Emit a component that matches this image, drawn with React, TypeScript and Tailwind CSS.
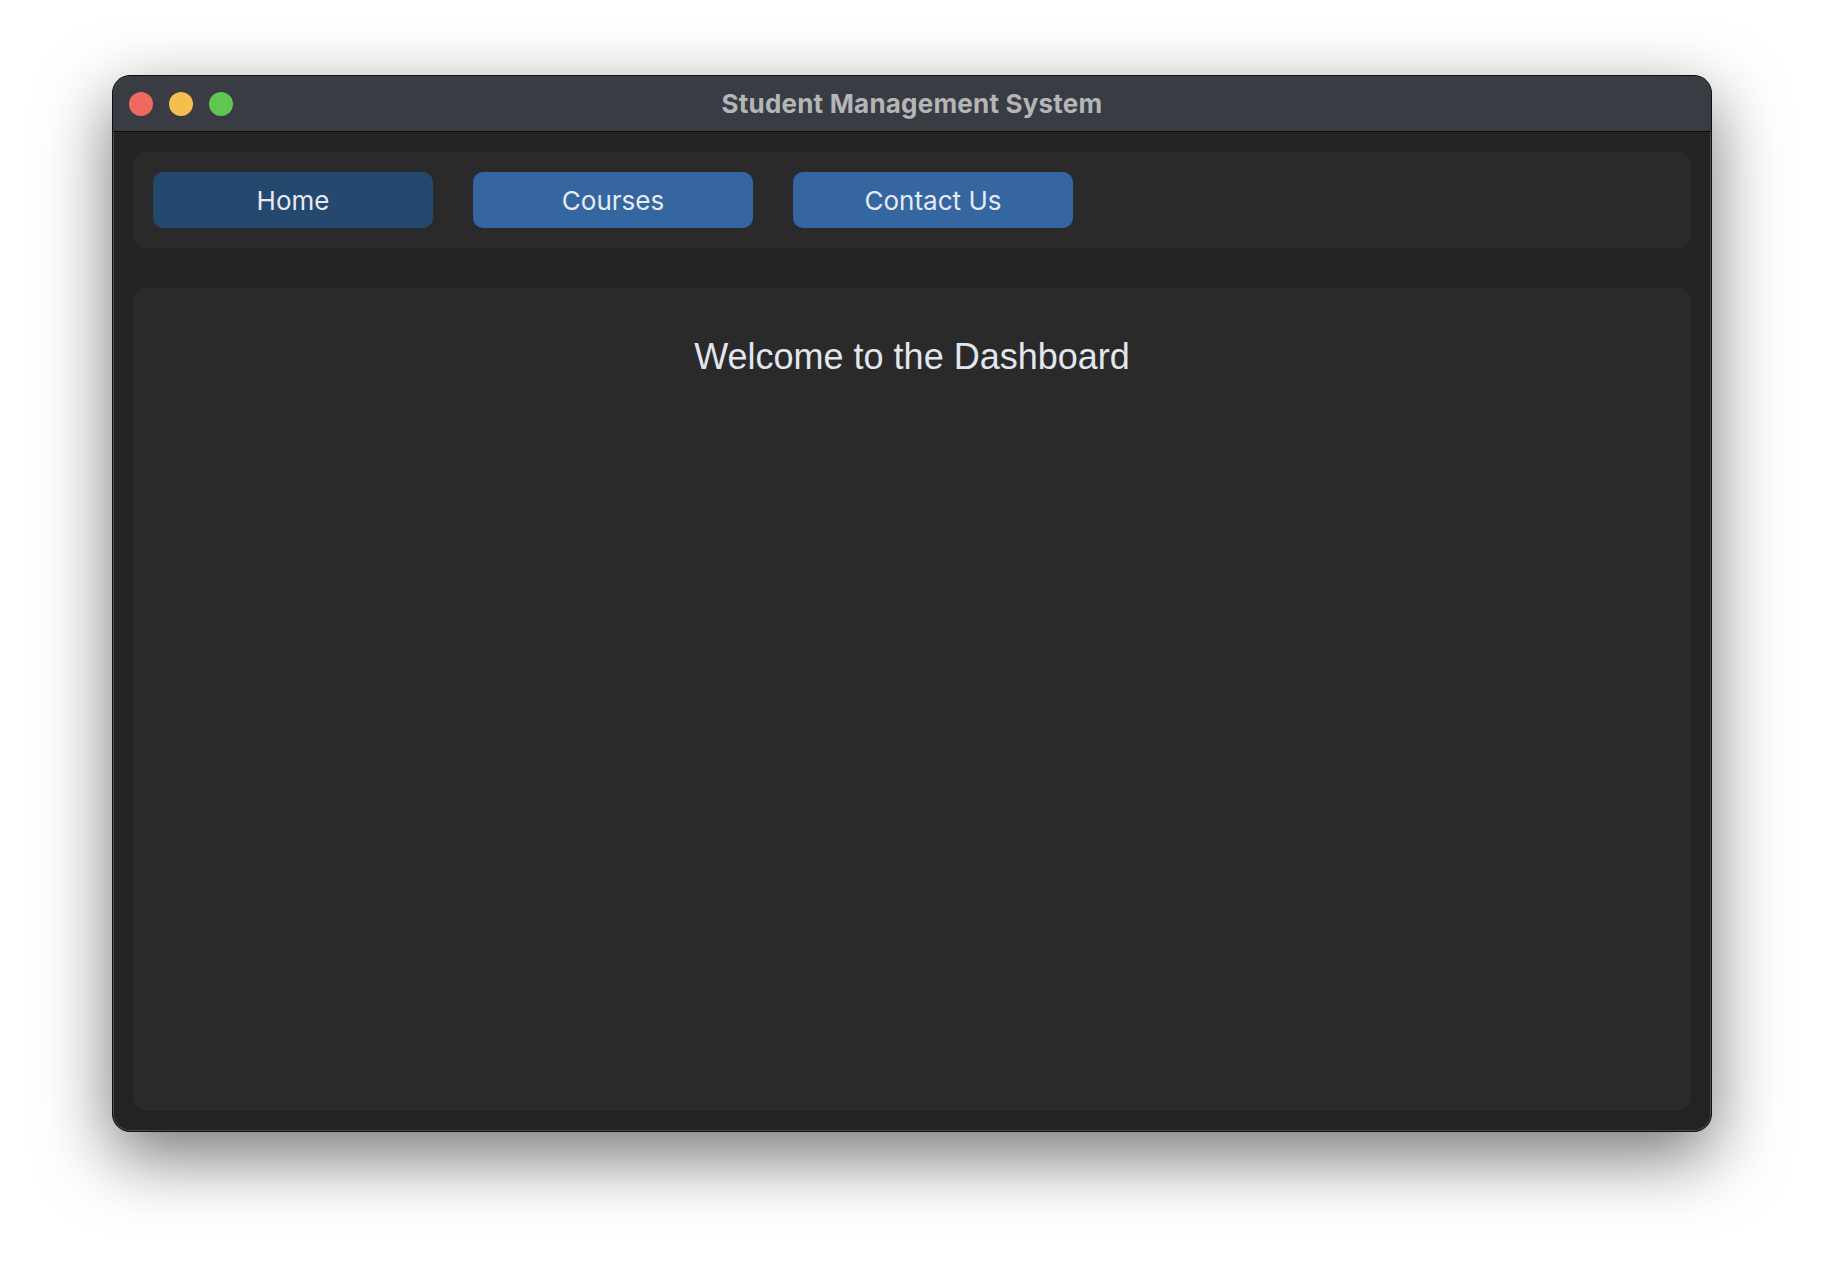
export default function App() {
  const tabs = ['Home', 'Courses', 'Contact Us']
  const active = 'Home'

  return (
    <div className="min-h-screen w-full bg-white px-[112px] pt-[75px]">
      <div className="flex h-[1057px] w-[1600px] flex-col overflow-hidden rounded-[18px] border border-[#111] bg-[#232323] shadow-[0_24px_70px_rgba(0,0,0,0.55),inset_0_0_0_1px_rgba(255,255,255,0.18)]">
        {/* title bar */}
        <div className="relative flex h-[56px] shrink-0 items-center border-b border-[#0e0e0e] bg-[#393c42]">
          <div className="absolute left-[16px] top-[16px] flex gap-[16px]">
            <span className="h-[24px] w-[24px] rounded-full bg-[#ee6a5e]" />
            <span className="h-[24px] w-[24px] rounded-full bg-[#f5bf4f]" />
            <span className="h-[24px] w-[24px] rounded-full bg-[#61c554]" />
          </div>
          <div className="w-full text-center text-[26px] font-bold tracking-[0.2px] text-[#b4b5b9] [font-family:Inter,'Noto_Sans',sans-serif]">
            Student Management System
          </div>
        </div>

        {/* body */}
        <div className="flex flex-1 flex-col gap-10 p-5">
          <nav className="flex gap-10 rounded-[14px] bg-[#2a2a2a] p-5">
            {tabs.map(t => (
              <button
                key={t}
                className={
                  'h-[56px] w-[280px] rounded-[10px] text-[26px] text-[#e6eaf2] [font-family:Inter,sans-serif] ' +
                  (t === active ? 'bg-[#24486e]' : 'bg-[#3566a0]')
                }
              >
                {t}
              </button>
            ))}
          </nav>

          <main className="flex-1 rounded-[14px] bg-[#2a2a2a] pt-[48px]">
            <h1 className="text-center text-[36px] leading-[42px] text-[#e2e6ee] [font-family:'Liberation_Sans',Arial,sans-serif]">
              Welcome to the Dashboard
            </h1>
          </main>
        </div>
      </div>
    </div>
  )
}
